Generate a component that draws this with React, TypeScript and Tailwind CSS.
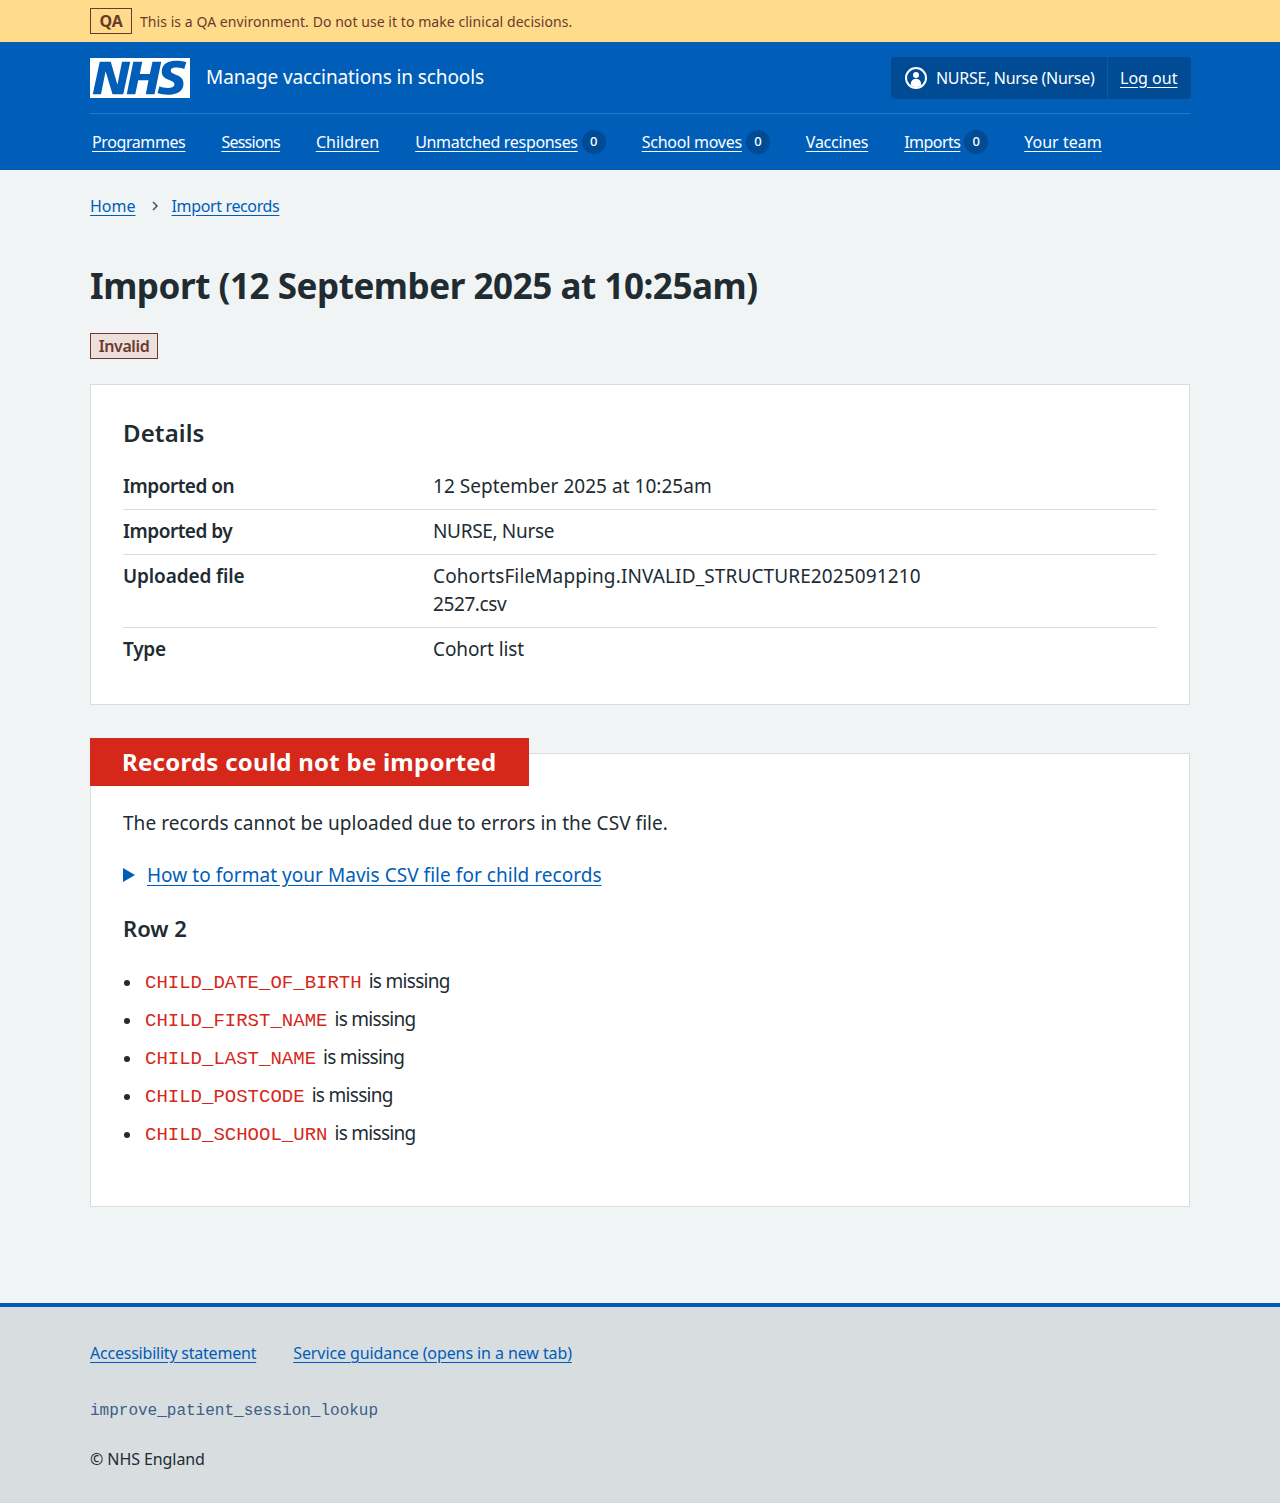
import React from "react";

function Logo() {
  return (
    <svg viewBox="0 0 40 16" className="block h-10 w-[100px]" aria-label="NHS">
      <path fill="#fff" d="M0 0h40v16H0z" />
      <path fill="#005eb8" d="M3.9 1.5h4.4l2.6 9h.1l1.8-9h3.3l-2.8 13H9l-2.7-9h-.1l-1.8 9H1.1M17.3 1.5h3.6l-1 4.9h4L25 1.5h3.5l-2.7 13h-3.5l1.1-5.6h-4.1l-1.2 5.6h-3.4M37.7 4.4c-.7-.3-1.6-.6-2.9-.6-1.4 0-2.5.2-2.5 1.3 0 1.8 5.1 1.2 5.1 5.1 0 3.6-3.3 4.5-6.4 4.5-1.3 0-2.9-.3-4-.7l.8-2.7c.7.4 2.1.7 3.2.7s2.8-.2 2.8-1.5c0-2.1-5.1-1.3-5.1-5 0-3.4 2.9-4.4 5.8-4.4 1.6 0 3.1.2 4 .6" />
    </svg>
  );
}

function UserIcon() {
  return (
    <svg viewBox="0 0 22 22" className="block h-[22px] w-[22px]">
      <circle cx="11" cy="11" r="10" fill="none" stroke="#fff" strokeWidth="2" />
      <circle cx="11" cy="8" r="3" fill="#fff" />
      <path fill="#fff" d="M5.8 18.2c-.3-3.6 1.8-6.4 5.2-6.4s5.500 2.800 5.200 6.400c-1.400 1.200-3.200 1.800-5.200 1.800s-3.800-.6-5.200-1.800z" />
    </svg>
  );
}

function NavItem({ label, count, className }: { label: string; count?: number; className: string }) {
  return (
    <a className="flex items-center whitespace-nowrap text-white" href="#">
      <span className={`underline decoration-1 underline-offset-[3px] ${className}`}>{label}</span>
      {count !== undefined && (
        <span className="ml-[4px] flex h-[24px] w-[24px] items-center justify-center rounded-full bg-[#004b93] text-[13px] font-medium">
          {count}
        </span>
      )}
    </a>
  );
}

function Row({ label, children, last, labelClass }: { label: string; children: React.ReactNode; last?: boolean; labelClass: string }) {
  return (
    <div className={`flex pt-[7px] pb-[9px] ${last ? "" : "border-b border-[#d8dde0]"}`}>
      <dt className={`w-[310px] shrink-0 font-semibold ${labelClass}`}>{label}</dt>
      <dd className="w-[490px]">{children}</dd>
    </div>
  );
}

function Missing({ field }: { field: string }) {
  return (
    <li className="mb-[10px] flex h-[28px] items-center leading-[28px]">
      <span className="ml-[1px] mr-[15px] mt-[4px] h-[6px] w-[6px] rounded-full bg-[#212b32]" />
      <code className="mt-[4px] font-['Liberation_Mono',monospace] text-[19px] text-[#d5281b]">{field}</code>
      <span className="ml-[7px] tracking-[-0.7px]">is missing</span>
    </li>
  );
}

export default function App() {
  return (
    <div className="flex min-h-[1503px] flex-col bg-[#f0f4f5] font-['Noto_Sans',sans-serif] text-[#212b32]">
      <div className="h-[42px] bg-[#ffdb8c]">
        <div className="mx-auto flex h-full w-[1100px] items-center">
          <span className="flex h-[26px] w-[42px] items-center justify-center border border-[#6b3a2c] text-[16px] font-bold leading-none tracking-[-0.3px] text-[#6b3a2c]">QA</span>
          <span className="ml-[8px] text-[14px] tracking-[0.06px] text-[#6b3a2c]">This is a QA environment. Do not use it to make clinical decisions.</span>
        </div>
      </div>

      <header className="h-[128px] bg-[#005eb8] text-white">
        <div className="mx-auto w-[1100px]">
          <div className="flex h-[72px] items-center justify-between border-b border-[#2676c4]">
            <div className="flex items-center">
              <Logo />
              <span className="ml-[16px] text-[19px] tracking-[-0.1px]">Manage vaccinations in schools</span>
            </div>
            <div className="-mr-px flex h-[42px] w-[300px] items-center rounded-[4px] bg-[#004b93] text-[16px]">
              <div className="flex h-full w-[217px] items-center gap-[9px] border-r border-[#0a5aa8] pl-[14px]">
                <UserIcon />
                <span className="tracking-[-0.3px]">NURSE, Nurse (Nurse)</span>
              </div>
              <a href="#" className="ml-[12px] underline underline-offset-[3px]">Log out</a>
            </div>
          </div>
          <nav className="flex h-[56px] items-center gap-[36px] pl-[2px] text-[16px]">
            <NavItem label="Programmes" className="tracking-[-0.4px]" />
            <NavItem label="Sessions" className="tracking-[-0.75px]" />
            <NavItem label="Children" className="tracking-[0px]" />
            <NavItem label="Unmatched responses" count={0} className="tracking-[-0.32px]" />
            <NavItem label="School moves" count={0} className="tracking-[-0.25px]" />
            <NavItem label="Vaccines" className="tracking-[-0.25px]" />
            <NavItem label="Imports" count={0} className="tracking-[-0.55px]" />
            <NavItem label="Your team" className="tracking-[0px]" />
          </nav>
        </div>
      </header>

      <main className="mx-auto w-[1100px] flex-1">
        <nav className="flex items-center pt-[24px] text-[16px] leading-[24px] text-[#005eb8]">
          <a href="#" className="underline underline-offset-[3px]">Home</a>
          <svg viewBox="0 0 8 12" className="mx-[14px] h-[12px] w-[8px] translate-x-px"><path d="M2 2l4 4-4 4" fill="none" stroke="#425563" strokeWidth="1.5" /></svg>
          <a href="#" className="underline underline-offset-[3px] tracking-[-0.36px]">Import records</a>
        </nav>

        <h1 className="mt-[44px] text-[35px] font-bold leading-[48px] tracking-[-0.45px]">Import (12 September 2025 at 10:25am)</h1>

        <div className="mt-[23px] flex">
          <strong className="flex h-[26px] w-[68px] items-center justify-center border border-[#6b3a2c] bg-[#ecdfdc] text-[16px] font-semibold tracking-[-0.4px] text-[#6b3a2c]">Invalid</strong>
        </div>

        <section className="mt-[25px] h-[321px] border border-[#d8dde0] bg-white px-[32px] pt-[32px] text-[19px] leading-[28px]">
          <h2 className="text-[24px] font-semibold leading-[32px] tracking-[0.1px]">Details</h2>
          <dl className="mt-[16px]">
            <Row label="Imported on" labelClass="tracking-[-0.5px]"><span className="tracking-[0.03px]">12 September 2025 at 10:25am</span></Row>
            <Row label="Imported by" labelClass="tracking-[-0.5px]"><span className="tracking-[-0.33px]">NURSE, Nurse</span></Row>
            <Row label="Uploaded file" labelClass="tracking-[-0.12px]">
              <span className="block tracking-[0.12px]">CohortsFileMapping.INVALID_STRUCTURE2025091210</span>
              <span className="block tracking-[-0.4px]">2527.csv</span>
            </Row>
            <Row label="Type" labelClass="tracking-[-0.25px]" last><span className="tracking-[-0.1px]">Cohort list</span></Row>
          </dl>
        </section>

        <section className="relative mt-[48px] h-[454px] border border-[#d8dde0] bg-white px-[32px] pt-[55px] text-[19px] leading-[28px]">
          <h2 className="absolute -left-px -top-[16px] flex h-[48px] w-[439px] items-center bg-[#d5281b] pl-[32px] text-[24px] font-bold tracking-[0.25px] text-white">Records could not be imported</h2>
          <p className="tracking-[0.05px]">The records cannot be uploaded due to errors in the CSV file.</p>
          <div className="mt-[24px] flex items-center text-[#005eb8]">
            <svg viewBox="0 0 12 14" className="mr-[12px] h-[14px] w-[12px]"><path d="M0 0l12 7-12 7z" fill="#005eb8" /></svg>
            <a href="#" className="underline underline-offset-[3px] tracking-[0.04px]">How to format your Mavis CSV file for child records</a>
          </div>
          <h3 className="mt-[23px] text-[22px] font-semibold leading-[32px]">Row 2</h3>
          <ul className="mt-[23px]">
            <Missing field="CHILD_DATE_OF_BIRTH" />
            <Missing field="CHILD_FIRST_NAME" />
            <Missing field="CHILD_LAST_NAME" />
            <Missing field="CHILD_POSTCODE" />
            <Missing field="CHILD_SCHOOL_URN" />
          </ul>
        </section>
      </main>

      <footer className="mt-[96px] h-[200px] border-t-4 border-[#005eb8] bg-[#d8dde0]">
        <div className="mx-auto w-[1100px] pt-[34px] text-[16px] leading-[24px]">
          <div className="flex gap-[37px] text-[#005eb8]">
            <a href="#" className="underline underline-offset-[3px] tracking-[-0.22px]">Accessibility statement</a>
            <a href="#" className="underline underline-offset-[3px] tracking-[-0.09px]">Service guidance (opens in a new tab)</a>
          </div>
          <div className="mt-[34px] font-['Liberation_Mono',monospace] text-[#3b5f8a]">improve_patient_session_lookup</div>
          <div className="mt-[24px] tracking-[-0.08px]">© NHS England</div>
        </div>
      </footer>
    </div>
  );
}
